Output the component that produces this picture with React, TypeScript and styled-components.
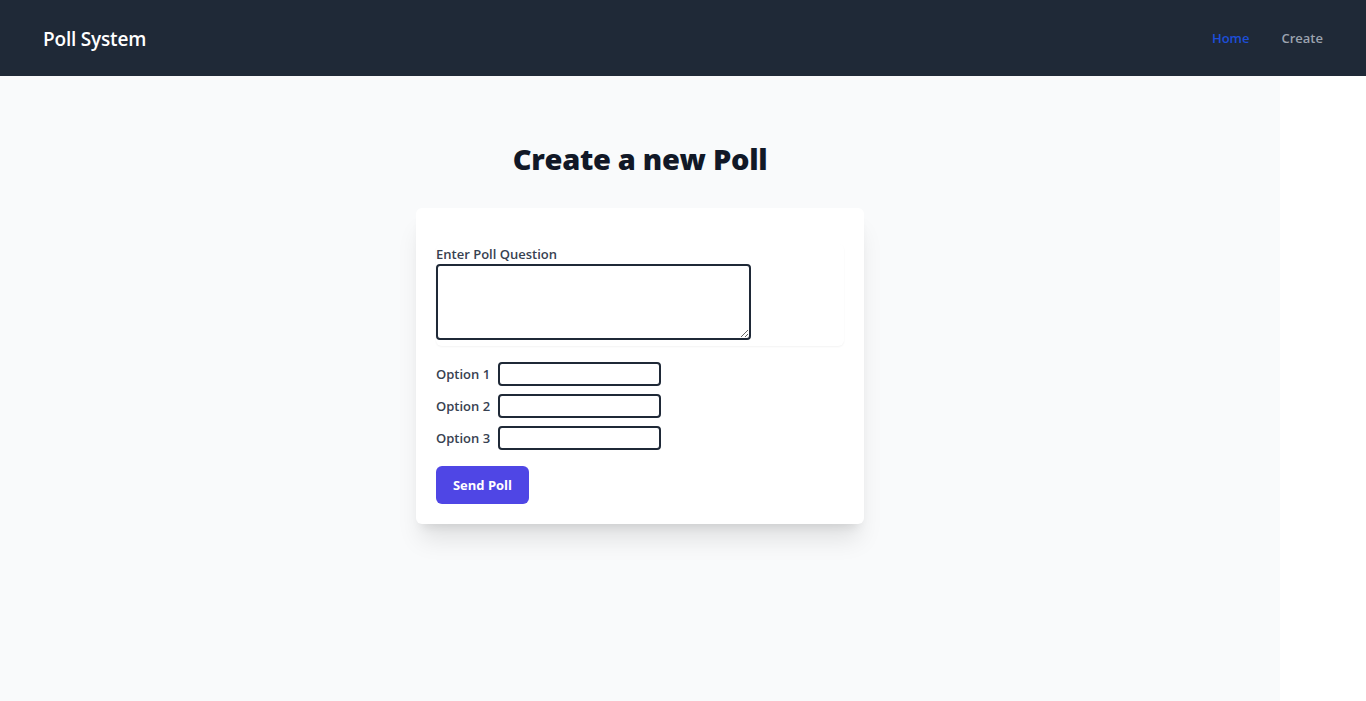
import React from "react";
import styled, { createGlobalStyle } from "styled-components";

const Global = createGlobalStyle`
  * { box-sizing: border-box; }
  body { margin: 0; font-family: "Open Sans", "Noto Sans", sans-serif; background: #ffffff; }
`;

const Nav = styled.nav`
  height: 76px;
  background: #1f2937;
  display: flex;
  align-items: center;
  justify-content: space-between;
  padding: 0 43px;
`;

const Brand = styled.div`
  color: #ffffff;
  font-size: 19px;
  font-weight: 600;
  letter-spacing: -0.2px;
  margin-top: 2px;
`;

const Links = styled.div`
  display: flex;
  gap: 32px;
`;

const NavLink = styled.a<{ $active?: boolean }>`
  font-size: 13px;
  font-weight: 600;
  color: ${(p) => (p.$active ? "#1d4ed8" : "#9ca3af")};
  text-decoration: none;
  cursor: pointer;
`;

const Main = styled.main`
  width: 1280px;
  min-height: 625px;
  background: #f9fafb;
  display: flex;
  flex-direction: column;
  align-items: center;
  padding-top: 65px;
`;

const Title = styled.h1`
  margin: 0 0 31px;
  font-size: 29px;
  line-height: 36px;
  font-weight: 800;
  color: #111827;
  letter-spacing: -0.3px;
`;

const Card = styled.form`
  width: 448px;
  background: #ffffff;
  border-radius: 6px;
  box-shadow: 0 20px 25px -5px rgba(0, 0, 0, 0.1), 0 8px 10px -6px rgba(0, 0, 0, 0.1);
  padding: 36px 20px 20px;
  display: flex;
  flex-direction: column;
`;

const QuestionBox = styled.div`
  border-radius: 6px;
  box-shadow: 0 1px 2px 0 rgba(0, 0, 0, 0.05);
  display: flex;
  flex-direction: column;
  padding-bottom: 6px;
  margin-bottom: 16px;
`;

const Label = styled.label`
  font-size: 13px;
  font-weight: 600;
  color: #374151;
  line-height: 20px;
`;

const TextArea = styled.textarea`
  width: 315px;
  height: 76px;
  border: 2px solid #1f2937;
  border-radius: 4px;
  font-family: inherit;
  outline: none;
`;

const OptionRow = styled.div`
  display: flex;
  align-items: center;
  gap: 8px;
  margin-bottom: 8px;
`;

const Input = styled.input`
  width: 163px;
  height: 24px;
  border: 2px solid #1f2937;
  border-radius: 4px;
  outline: none;
`;

const Button = styled.button`
  margin-top: 8px;
  align-self: flex-start;
  width: 93px;
  height: 38px;
  background: #4f46e5;
  color: #ffffff;
  border: none;
  border-radius: 6px;
  font-family: inherit;
  font-size: 13px;
  font-weight: 700;
  cursor: pointer;
`;

export default function App() {
  return (
    <>
      <Global />
      <Nav>
        <Brand>Poll System</Brand>
        <Links>
          <NavLink $active>Home</NavLink>
          <NavLink>Create</NavLink>
        </Links>
      </Nav>
      <Main>
        <Title>Create a new Poll</Title>
        <Card onSubmit={(e) => e.preventDefault()}>
          <QuestionBox>
            <Label>Enter Poll Question</Label>
            <TextArea />
          </QuestionBox>
          {[1, 2, 3].map((n) => (
            <OptionRow key={n}>
              <Label>Option {n}</Label>
              <Input />
            </OptionRow>
          ))}
          <Button type="submit">Send Poll</Button>
        </Card>
      </Main>
    </>
  );
}
